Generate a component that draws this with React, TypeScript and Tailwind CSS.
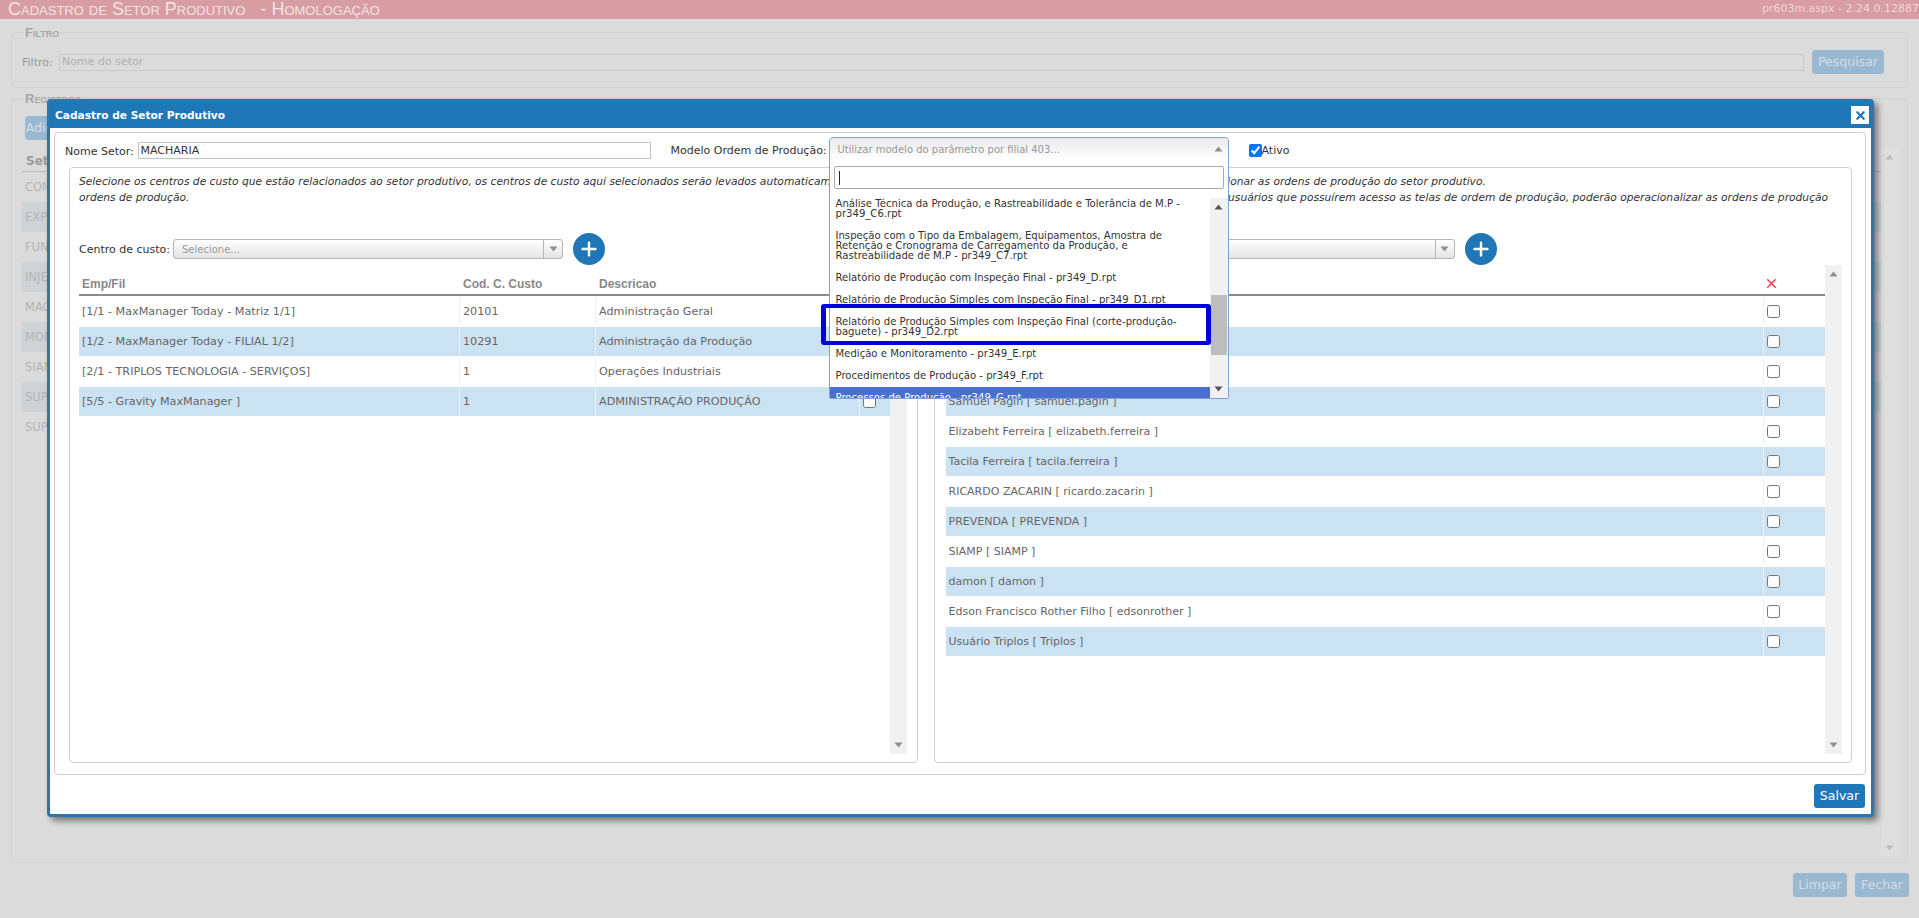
import { X, Plus } from "lucide-react";

const bgRows = ["COMPRAS", "EXPEDIÇÃO", "FUNDIÇÃO", "INJEÇÃO", "MACHARIA", "MONTAGEM", "SIAMP", "SUPORTE", "SUPERVISÃO"];

const leftRows = [
  ["[1/1 - MaxManager Today - Matriz 1/1]", "20101", "Administração Geral"],
  ["[1/2 - MaxManager Today - FILIAL 1/2]", "10291", "Administração da Produção"],
  ["[2/1 - TRIPLOS TECNOLOGIA - SERVIÇOS]", "1", "Operações Industriais"],
  ["[5/5 - Gravity MaxManager ]", "1", "ADMINISTRAÇÃO PRODUÇÃO"],
];

const rightRows = [
  "Administrador [ admin ]",
  "Suporte [ suporte ]",
  "Gerente [ gerente ]",
  "Samuel Pagin [ samuel.pagin ]",
  "Elizabeht Ferreira [ elizabeth.ferreira ]",
  "Tacila Ferreira [ tacila.ferreira ]",
  "RICARDO ZACARIN [ ricardo.zacarin ]",
  "PREVENDA [ PREVENDA ]",
  "SIAMP [ SIAMP ]",
  "damon [ damon ]",
  "Edson Francisco Rother Filho [ edsonrother ]",
  "Usuário Triplos [ Triplos ]",
];

function Tri({ down, color = "#8f8f8f" }: { down?: boolean; color?: string }) {
  return (
    <svg width="9" height="6" viewBox="0 0 9 6" className="shrink-0">
      <path d={down ? "M0.5 0.5h8L4.5 5.5z" : "M4.5 0.5L8.5 5.5h-8z"} fill={color} />
    </svg>
  );
}

function Scrollbar() {
  return (
    <div className="flex h-full w-[17px] shrink-0 flex-col items-center justify-between bg-[#f1f1f1] py-[6px]">
      <Tri />
      <Tri down />
    </div>
  );
}

function Combo({ label, width }: { label: string; width: string }) {
  return (
    <div className="flex h-[32px] items-center">
      <span className="w-[94px] shrink-0 whitespace-nowrap pt-[2px] text-[11px] text-[#333]">{label}</span>
      <div className={`${width} flex h-[20px] items-center rounded-[3px] border border-[#b5b5b5] bg-gradient-to-b from-white to-[#e4e4e4]`}>
        <span className="flex-1 pl-[8px] text-[10px] text-[#999]">Selecione...</span>
        <span className="flex h-full w-[19px] items-center justify-center border-l border-[#b5b5b5]">
          <Tri down />
        </span>
      </div>
      <span className="ml-[10px] flex h-[32px] w-[32px] shrink-0 items-center justify-center rounded-full bg-[#1f77b7]">
        <Plus size={22} color="#fff" strokeWidth={2.6} />
      </span>
    </div>
  );
}

function Option({ children, active }: { children: React.ReactNode; active?: boolean }) {
  return (
    <div className={`px-[6px] py-[6px] text-[10.1px] leading-[10px] ${active ? "bg-[#4a6fd0] text-white" : "text-[#333]"}`}>
      {children}
    </div>
  );
}

export default function App() {
  return (
    <div className="relative h-[918px] w-[1919px] overflow-hidden bg-[#dbdbdb] font-['DejaVu_Sans',sans-serif] text-[#9a9a9a]">
      {/* Page behind the modal */}
      <div className="flex h-[19px] items-center justify-between bg-[#d89ca3] pl-[8px] text-[#f0e4e5]">
        <span className="whitespace-pre font-['Liberation_Sans',sans-serif] text-[18px] [font-variant-caps:small-caps]">
          Cadastro de Setor Produtivo{"  "} - Homologação
        </span>
        <span className="text-[11px] text-[#eed9db]">pr603m.aspx - 2.24.0.12887</span>
      </div>

      <div className="mx-[11px] mt-[13px] h-[56px] rounded-[4px] border border-[#d2d2d2]">
        <div className="-mt-[7px] ml-[12px] w-fit bg-[#dbdbdb] px-[1px] font-['Liberation_Sans',sans-serif] text-[13px] font-bold leading-[14px] text-[#a8a8a8] [font-variant-caps:small-caps]">
          Filtro
        </div>
        <div className="mt-[10px] flex items-center pl-[10px] pr-[23px]">
          <span className="w-[37px] shrink-0 pt-[2px] text-[11px] text-[#999]">Filtro:</span>
          <div className="flex h-[17px] flex-1 items-center border border-[#cacaca] pl-[2px] text-[11px] text-[#b0b0b0]">Nome do setor</div>
          <span className="ml-[8px] flex h-[24px] w-[72px] items-center justify-center rounded-[3px] bg-[#9ab8cf] text-[12.5px] text-[#d3dde5]">Pesquisar</span>
        </div>
      </div>

      <div className="mx-[11px] mt-[10px] h-[765px] rounded-[4px] border border-[#d2d2d2]">
        <div className="-mt-[7px] ml-[12px] w-fit bg-[#dbdbdb] px-[1px] font-['Liberation_Sans',sans-serif] text-[13px] font-bold leading-[14px] text-[#a8a8a8] [font-variant-caps:small-caps]">
          Registros
        </div>
        <div className="flex pl-[10px] pr-[9px]">
          <div className="flex-1">
            <div className="ml-[3px] mt-[10px] flex h-[24px] w-[60px] items-center justify-center rounded-[3px] bg-[#9ab8cf] text-[12.5px] text-[#d3dde5]">Adicionar</div>
            <div className="mt-[12px] h-[20px] border-b border-[#bdbdbd] pl-[4px] text-[12px] font-bold">Setor</div>
            {bgRows.map((r, i) => (
              <div key={r} className={`flex h-[30px] items-center pl-[3px] pt-[2px] text-[11.5px] text-[#b4b4b4] ${i % 2 ? "bg-[#cfd3d6]" : ""}`}>{r}</div>
            ))}
          </div>
          <div className="mt-[43px] flex h-[707px] w-[17px] flex-col items-center justify-between bg-[#dedede] py-[5px]">
            <Tri color="#bcbcbc" />
            <Tri down color="#bcbcbc" />
          </div>
        </div>
      </div>

      <div className="mt-[10px] flex justify-end gap-[8px] pr-[10px]">
        <span className="flex h-[24px] w-[54px] items-center justify-center rounded-[3px] bg-[#9ab8cf] text-[12.5px] text-[#d3dde5]">Limpar</span>
        <span className="flex h-[24px] w-[54px] items-center justify-center rounded-[3px] bg-[#9ab8cf] text-[12.5px] text-[#d3dde5]">Fechar</span>
      </div>

      {/* Modal */}
      <div className="absolute left-[47px] top-[99px] h-[718px] w-[1827px] rounded-[4px] border-[3px] border-[#2a77b0] bg-white shadow-[4px_4px_6px_rgba(0,0,0,0.45)]">
        <div className="flex h-[26px] items-center justify-between bg-[#1f77b7] pl-[5px] pr-[2px]">
          <span className="pt-[2px] text-[10.6px] font-bold text-white">Cadastro de Setor Produtivo</span>
          <span className="flex h-[18px] w-[18px] items-center justify-center bg-white">
            <X size={13} color="#1f77b7" strokeWidth={4} />
          </span>
        </div>

        <div className="ml-[4px] mr-[5px] mt-[4px] h-[643px] rounded-[4px] border border-[#cfcfcf]">
          <div className="ml-[10px] mt-[9px] flex h-[17px] items-center">
            <span className="w-[72.5px] shrink-0 pt-[3px] text-[11px] text-[#333]">Nome Setor:</span>
            <div className="flex h-[17px] w-[513px] items-center border border-[#c4c4c4] pl-[2px] pt-[2px] text-[11px] text-[#333]">MACHARIA</div>
            <span className="ml-[20px] w-[158px] shrink-0 pt-[1px] text-[11px] text-[#333]">Modelo Ordem de Produção:</span>

            <div className="relative h-[17px] w-[400px] shrink-0">
              <div className="absolute -top-[5px] left-0 z-10 h-[262px] w-[400px] rounded-t-[4px] rounded-b-[2px] border border-[#7f9fd6] bg-white">
                <div className="flex h-[22px] items-center justify-between rounded-t-[4px] bg-gradient-to-b from-[#e9e9e9] to-white pl-[8px] pr-[5px] text-[10px] text-[#999]">
                  <span>Utilizar modelo do parâmetro por filial 403...</span>
                  <Tri />
                </div>
                <div className="ml-[4px] mr-[4px] mt-[6px] flex h-[23px] items-center rounded-[2px] border border-[#aaa] pl-[4px]">
                  <span className="h-[14px] w-[1px] bg-[#222]" />
                </div>
                <div className="mt-[9px] flex h-[200px] overflow-hidden">
                  <div className="-mt-[5px] min-w-0 flex-1">
                    <Option>Análise Técnica da Produção, e Rastreabilidade e Tolerância de M.P - pr349_C6.rpt</Option>
                    <Option>Inspeção com o Tipo da Embalagem, Equipamentos, Amostra de Retenção e Cronograma de Carregamento da Produção, e Rastreabilidade de M.P - pr349_C7.rpt</Option>
                    <Option>Relatório de Produção com Inspeção Final - pr349_D.rpt</Option>
                    <Option>Relatório de Produção Simples com Inspeção Final - pr349_D1.rpt</Option>
                    <Option>Relatório de Produção Simples com Inspeção Final (corte-produção-baguete) - pr349_D2.rpt</Option>
                    <Option>Medição e Monitoramento - pr349_E.rpt</Option>
                    <Option>Procedimentos de Produção - pr349_F.rpt</Option>
                    <Option active>Processos de Produção - pr349_G.rpt</Option>
                  </div>
                  <div className="relative flex h-full w-[18px] shrink-0 flex-col items-center justify-between bg-[#f1f1f1] py-[6px]">
                    <Tri color="#555" />
                    <Tri down color="#555" />
                    <div className="absolute left-[1px] top-[97px] h-[60px] w-[16px] bg-[#bdbdbd]" />
                  </div>
                </div>
                <div className="absolute -left-[9px] top-[166px] h-[41px] w-[390px] rounded-[3px] border-y-4 border-x-[5px] border-[#0000dc]" />
              </div>
            </div>

            <input type="checkbox" defaultChecked className="ml-[20px] h-[13px] w-[13px]" />
            <span className="pt-[1px] text-[11px] text-[#333]">Ativo</span>
          </div>

          <div className="ml-[14px] mr-[13px] mt-[8px] flex h-[596px] gap-[16px]">
            <div className="h-full w-[849px] rounded-[4px] border border-[#cfcfcf] pl-[9px]">
              <p className="mt-[6px] h-[59px] whitespace-nowrap text-[10.7px] italic leading-[16px] text-[#333]">
                Selecione os centros de custo que estão relacionados ao setor produtivo, os centros de custo aqui selecionados serão levados automaticamente para as
                <br />
                ordens de produção.
              </p>
              <Combo label="Centro de custo:" width="w-[390px]" />
              <div className="flex h-[489px]">
                <div className="w-[811px] pt-[5px]">
                  <div className="flex h-[26px] items-center border-b-2 border-[#8a8a8a] pt-[3px] font-['Liberation_Sans',sans-serif] text-[12px] font-bold text-[#888]">
                    <span className="w-[381px] pl-[3px]">Emp/Fil</span>
                    <span className="w-[136px] pl-[3px]">Cod. C. Custo</span>
                    <span className="w-[264px] pl-[3px]">Descricao</span>
                  </div>
                  {leftRows.map((r, i) => (
                    <div key={r[0]} className={`flex h-[30px] items-center border-t border-white text-[11.2px] text-[#666] ${i % 2 ? "bg-[#cbe2f2]" : ""}`}>
                      <span className="flex h-full w-[381px] items-center border-r border-[#eef2f5] pl-[3px] pt-[2px]">{r[0]}</span>
                      <span className="flex h-full w-[136px] items-center border-r border-[#eef2f5] pl-[3px] pt-[2px]">{r[1]}</span>
                      <span className="flex h-full w-[264px] items-center border-r border-[#eef2f5] pl-[3px] pt-[2px]">{r[2]}</span>
                      <span className="flex h-full w-[30px] items-center pl-[3px]">
                        <input type="checkbox" className="h-[13px] w-[13px]" />
                      </span>
                    </div>
                  ))}
                </div>
                <Scrollbar />
              </div>
            </div>

            <div className="h-full w-[919px] rounded-[4px] border border-[#cfcfcf] pl-[11px]">
              <p className="ml-[1px] mt-[6px] h-[59px] whitespace-nowrap text-[10.7px] italic leading-[16px] text-[#333]">
                Selecione usuários que poderão movimentar e selecionar as ordens de produção do setor produtivo.
                <br />
                Caso nenhum usuário seja informado aqui, todos os usuários que possuírem acesso as telas de ordem de produção, poderão operacionalizar as ordens de produção
              </p>
              <div className="ml-[1px]">
                <Combo label="Usuário:" width="w-[414px]" />
              </div>
              <div className="flex h-[489px]">
                <div className="w-[879px] pt-[5px]">
                  <div className="flex h-[26px] items-center border-b-2 border-[#8a8a8a] pt-[3px] font-['Liberation_Sans',sans-serif] text-[12px] font-bold text-[#888]">
                    <span className="w-[818px] pl-[3px]">Usuário</span>
                    <span className="flex w-[61px]">
                      <X size={15} color="#e8434f" strokeWidth={2.5} />
                    </span>
                  </div>
                  {rightRows.map((r, i) => (
                    <div key={r} className={`flex h-[30px] items-center border-t border-white text-[11px] text-[#666] ${i % 2 ? "bg-[#cbe2f2]" : ""}`}>
                      <span className="flex h-full w-[818px] items-center border-r border-[#eef2f5] pl-[3px] pt-[2px]">{r}</span>
                      <span className="flex h-full w-[61px] items-center pl-[3px]">
                        <input type="checkbox" className="h-[13px] w-[13px]" />
                      </span>
                    </div>
                  ))}
                </div>
                <Scrollbar />
              </div>
            </div>
          </div>
        </div>

        <div className="mr-[6px] mt-[9px] flex justify-end">
          <span className="flex h-[24px] w-[51px] items-center justify-center rounded-[3px] bg-[#1f77b7] text-[12.5px] text-white">Salvar</span>
        </div>
      </div>
    </div>
  );
}
